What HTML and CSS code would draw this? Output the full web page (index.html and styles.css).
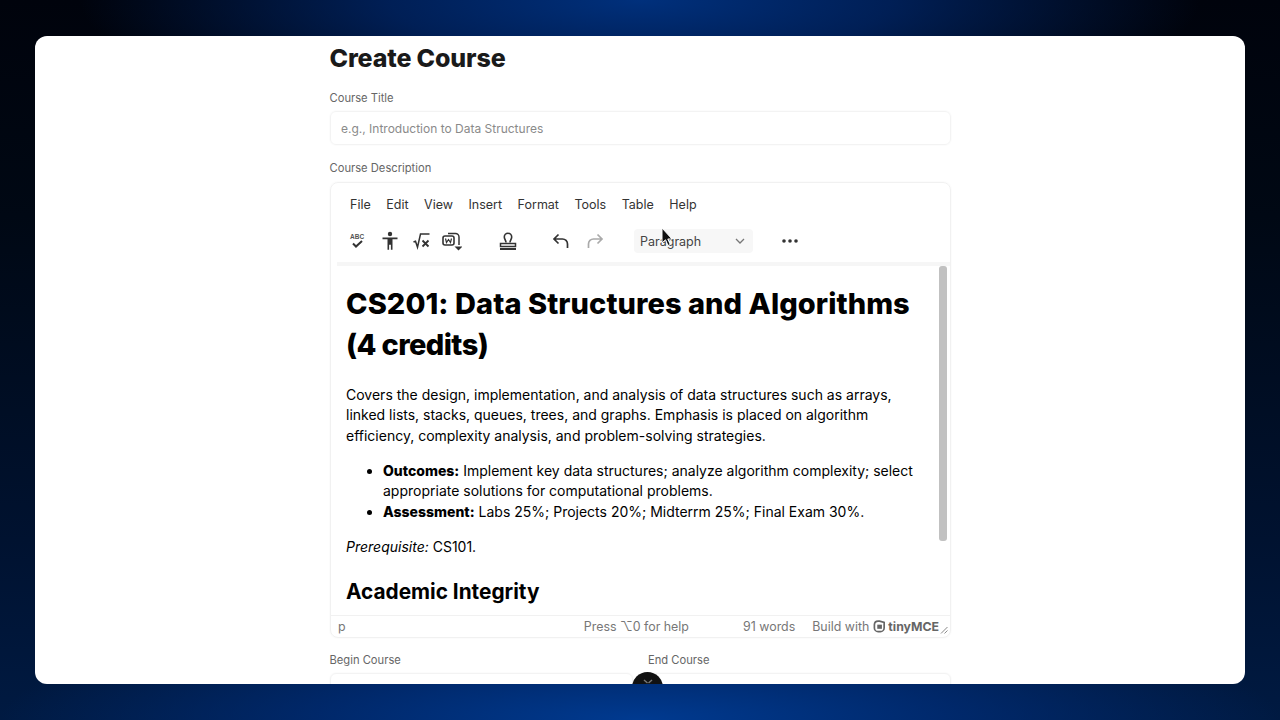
FILE: index.html
```html
<!DOCTYPE html>
<html lang="en">
<head>
<meta charset="utf-8">
<title>Create Course</title>
<link rel="stylesheet" href="styles.css">
</head>
<body>
<main class="card">
  <form class="form">
    <h1 class="page-title">Create Course</h1>
    <label class="label label-first">Course Title</label>
    <div class="input"><span class="placeholder">e.g., Introduction to Data Structures</span></div>
    <label class="label label-desc">Course Description</label>
    <section class="editor">
      <nav class="menubar">
        <span>File</span><span>Edit</span><span>View</span><span>Insert</span><span>Format</span><span>Tools</span><span>Table</span><span>Help</span>
      </nav>
      <div class="toolbar">
        <svg class="icon" viewBox="0 0 20 20"><text x="2" y="7.500" class="abc">ABC</text><path d="M5 12.500l3 3 6-5.500" fill="none" stroke="#333" stroke-width="2"/></svg>
        <svg class="icon gap-a" viewBox="0 0 20 20"><circle cx="10" cy="3" r="2.200" fill="#333"/><path d="M2.500 6.500h15v1.800h-5v10.500h-1.600v-5h-1.800v5H7.500V8.300h-5z" fill="#333"/></svg>
        <svg class="icon gap-b" viewBox="0 0 20 20"><path d="M1.500 11l2-.8 2 6 3-13.200h9" fill="none" stroke="#333" stroke-width="1.500"/><path d="M10.500 9.500l6 6m0-6l-6 6" fill="none" stroke="#333" stroke-width="1.800"/></svg>
        <svg class="icon gap-c" viewBox="0 0 20 20"><rect x="1" y="5" width="11" height="9" rx="2" fill="none" stroke="#333" stroke-width="1.600"/><path d="M3.500 7.500l1 4 2-3 2 3 1-4" fill="none" stroke="#333" stroke-width="1.200"/><path d="M6 2.500h7.500a3.500 3.500 0 0 1 3.500 3.500v8" fill="none" stroke="#333" stroke-width="1.500"/><path d="M12.500 15.500h8L16.500 19.500z" fill="#333"/></svg>
        <svg class="icon gap-d" viewBox="0 0 20 20"><path d="M8 11.500c0-2.500-1.700-3-1.700-5.500a3.700 3.700 0 0 1 7.400 0c0 2.500-1.700 3-1.700 5.500" fill="none" stroke="#333" stroke-width="1.600"/><path d="M2.500 12.500h15v3h-15z" fill="none" stroke="#333" stroke-width="1.500"/><path d="M2 18h16" stroke="#333" stroke-width="1.800"/></svg>
        <svg class="icon gap-e" viewBox="0 0 20 20"><path d="M7.500 3.500L3 8l4.500 4.500M3 8h8.500a5 5 0 0 1 5 5v4" fill="none" stroke="#333" stroke-width="1.700"/></svg>
        <svg class="icon gap-f" viewBox="0 0 20 20"><path d="M12.500 3.500L17 8l-4.500 4.500M17 8H8.500a5 5 0 0 0-5 5v4" fill="none" stroke="#aaa" stroke-width="1.700"/></svg>
        <div class="select"><span>Paragraph</span><svg class="chev" viewBox="0 0 10 6"><path d="M1 1l4 4 4-4" fill="none" stroke="#777" stroke-width="1.300"/></svg></div>
        <svg class="more" viewBox="0 0 16 4"><circle cx="2" cy="2" r="1.800"/><circle cx="8" cy="2" r="1.800"/><circle cx="14" cy="2" r="1.800"/></svg>
      </div>
      <div class="content-wrap">
        <article class="content">
          <h2 class="doc-title">CS201: Data Structures and Algorithms <span class="doc-credits">(4 credits)</span></h2>
          <p class="intro">Covers the design, implementation, and analysis of data structures such as arrays, linked lists, stacks, queues, trees, and graphs. Emphasis is placed on algorithm efficiency, complexity analysis, and problem-solving strategies.</p>
          <ul class="doc-list">
            <li><strong>Outcomes:</strong> Implement key data structures; analyze algorithm complexity; select appropriate solutions for computational problems.</li>
            <li><strong>Assessment:</strong> Labs 25%; Projects 20%; Midterrm 25%; Final Exam 30%.</li>
          </ul>
          <p class="prereq"><em>Prerequisite:</em> CS101.</p>
          <h3 class="doc-sub">Academic Integrity</h3>
        </article>
        <div class="scroll-track"><div class="scroll-thumb"></div></div>
      </div>
      <footer class="status">
        <span class="path">p</span>
        <span class="help">Press ⌥0 for help</span>
        <span class="words">91 words</span>
        <span class="build">Build with
          <svg class="tiny-logo" viewBox="0 0 14 14"><path d="M7 1.200l5 1.300v6a4 4 0 0 1-4 4H5.500a4 4 0 0 1-4-4V5a4 4 0 0 1 4-3.800z" fill="none" stroke="#666" stroke-width="1.800"/><rect x="4.600" y="5" width="5" height="4.500" fill="#666"/></svg>
          <b class="tiny-name">tinyMCE</b>
        </span>
        <svg class="grip" viewBox="0 0 8 8"><path d="M7.500 1L1 7.500M7.500 4.500L4.500 7.500" stroke="#888" stroke-width="1" fill="none"/></svg>
      </footer>
    </section>
    <div class="dates">
      <div class="date-col">
        <label class="label">Begin Course</label>
        <div class="input"></div>
      </div>
      <div class="date-col">
        <label class="label">End Course</label>
        <div class="input"></div>
      </div>
    </div>
  </form>
  <div class="fab"><svg viewBox="0 0 12 8"><path d="M2 1l3.500 3M10 1L6.500 4" stroke="#777" stroke-width="1.500" fill="none"/></svg></div>
</main>
<svg class="cursor" viewBox="0 0 12 20"><path d="M1 1v15l3.500-3.200 2.500 5.700 2.300-1-2.500-5.500H11z" fill="#111" stroke="#fff" stroke-width="1"/></svg>
</body>
</html>
```
FILE: styles.css
```css
* { box-sizing: border-box; }
html, body { margin: 0; height: 100%; }
body {
  width: 1280px;
  height: 720px;
  overflow: hidden;
  padding: 36px 35px;
  font-family: Inter, "Liberation Sans", sans-serif;
  background:
    radial-gradient(ellipse 560px 130px at 640px 0, #00307c 0%, rgba(0,40,110,.75) 45%, rgba(0,30,80,0) 100%),
    radial-gradient(ellipse 640px 110px at 640px 720px, #003a90 0%, rgba(0,45,120,.75) 50%, rgba(0,30,80,0) 100%),
    linear-gradient(180deg, #00030c 0%, #000814 30%, #001230 75%, #001a42 100%);
  position: relative;
}
.card {
  position: relative;
  width: 1210px;
  height: 648px;
  background: #fff;
  border-radius: 12px;
  overflow: hidden;
}
.form { width: 622px; margin: 0 auto; padding-left: 1px; }
.page-title { margin: 6px 0 0 -.5px; font-size: 25px; line-height: 32px; font-weight: 800; color: #1a1a1a; letter-spacing: -.15px; }
.label { display: block; font-size: 11.200px; line-height: 14px; color: #666; margin-left: -.5px; }
.label-first { margin-top: 17px; }
.label-desc { margin-top: 16px; }
.input {
  height: 34px;
  margin-top: 6px;
  border: 1px solid #f3f3f3;
  border-radius: 6px;
  padding: 0 10px;
  display: flex;
  align-items: center;
  box-shadow: 0 0 2px rgba(0,0,0,.05);
}
.placeholder { font-size: 12px; color: #8a8a8a; }
.editor {
  margin-top: 7px;
  height: 456px;
  border: 1px solid #f1f1f1;
  border-radius: 8px;
  display: flex;
  flex-direction: column;
  overflow: hidden;
  box-shadow: 0 0 2px rgba(0,0,0,.05);
}
.menubar {
  display: flex;
  gap: 15.500px;
  height: 41px;
  padding: 13px 0 0 19px;
  font-size: 12.500px;
  line-height: 18px;
  color: #333;
}
.toolbar {
  height: 42px;
  display: flex;
  align-items: center;
  padding: 0 0 4px 11px;
  border-bottom: 4px solid #f6f6f6;
  margin-left: 6px;
}
.icon { width: 20px; height: 20px; flex: none; }
.abc { font: 700 6.500px "Liberation Sans", sans-serif; fill: #555; }
.gap-a { margin-left: 12px; }
.gap-b { margin-left: 12px; }
.gap-c { margin-left: 10px; }
.gap-d { margin-left: 36px; }
.gap-e { margin-left: 33px; }
.gap-f { margin-left: 14px; }
.select {
  margin-left: 29px;
  width: 119px;
  height: 24px;
  background: #f7f7f7;
  border-radius: 4px;
  display: flex;
  align-items: center;
  justify-content: space-between;
  padding: 0 8px 0 6px;
  font-size: 12.500px;
  color: #444;
}
.chev { width: 10px; height: 6px; }
.more { width: 16px; height: 4px; margin-left: 29px; fill: #333; }
.content-wrap { flex: 1; min-height: 0; display: flex; overflow: hidden; position: relative; }
.content { flex: 1; padding: 0 0 0 15px; min-width: 0; color: #000; font-size: 14px; line-height: 20.500px; }
.doc-title { margin: 17px 0 0; font-size: 29px; line-height: 41px; font-weight: 800; width: 580px; letter-spacing: .06px; }
.doc-credits { letter-spacing: -.6px; }
.intro { margin: 19.800px 0 0; width: 570px; }
.doc-list { margin: 14.500px 0 0; padding-left: 37px; width: 586px; }
.doc-list strong { font-weight: 800; }
.prereq { margin: 14.500px 0 0; }
.doc-sub { margin: 19.500px 0 0; font-size: 20.800px; line-height: 30px; font-weight: 700; }
.scroll-track { width: 10px; flex: none; margin-right: 2px; padding: 0 1px; }
.scroll-thumb { height: 275px; background: #c1c1c1; border-radius: 3px; }
.status {
  height: 22px;
  flex: none;
  border-top: 1px solid #f1f1f1;
  display: flex;
  align-items: center;
  font-size: 12.400px;
  color: #777;
  padding: 0 2px 0 7px;
}
.path { width: 247px; }
.help { width: 160px; }
.words { width: 69.500px; }
.build { display: flex; align-items: center; gap: 4px; white-space: nowrap; }
.tiny-logo { width: 13px; height: 13px; margin-left: 0; }
.tiny-name { font-size: 12.300px; color: #666; font-weight: 700; margin-left: -2px; }
.grip { width: 8px; height: 8px; margin: 6px 0 0 1px; }
.dates { display: grid; grid-template-columns: 1fr 1fr; column-gap: 16px; margin-top: 15px; }
.date-col .input { margin-top: 6px; }
.fab {
  position: absolute;
  left: 597px;
  top: 636px;
  width: 31px;
  height: 31px;
  border-radius: 50%;
  background: #111;
  display: flex;
  align-items: flex-start;
  justify-content: center;
  padding-top: 7px;
}
.fab svg { width: 12px; height: 8px; }
.cursor { position: absolute; left: 661px; top: 227px; width: 12px; height: 20px; }
```
